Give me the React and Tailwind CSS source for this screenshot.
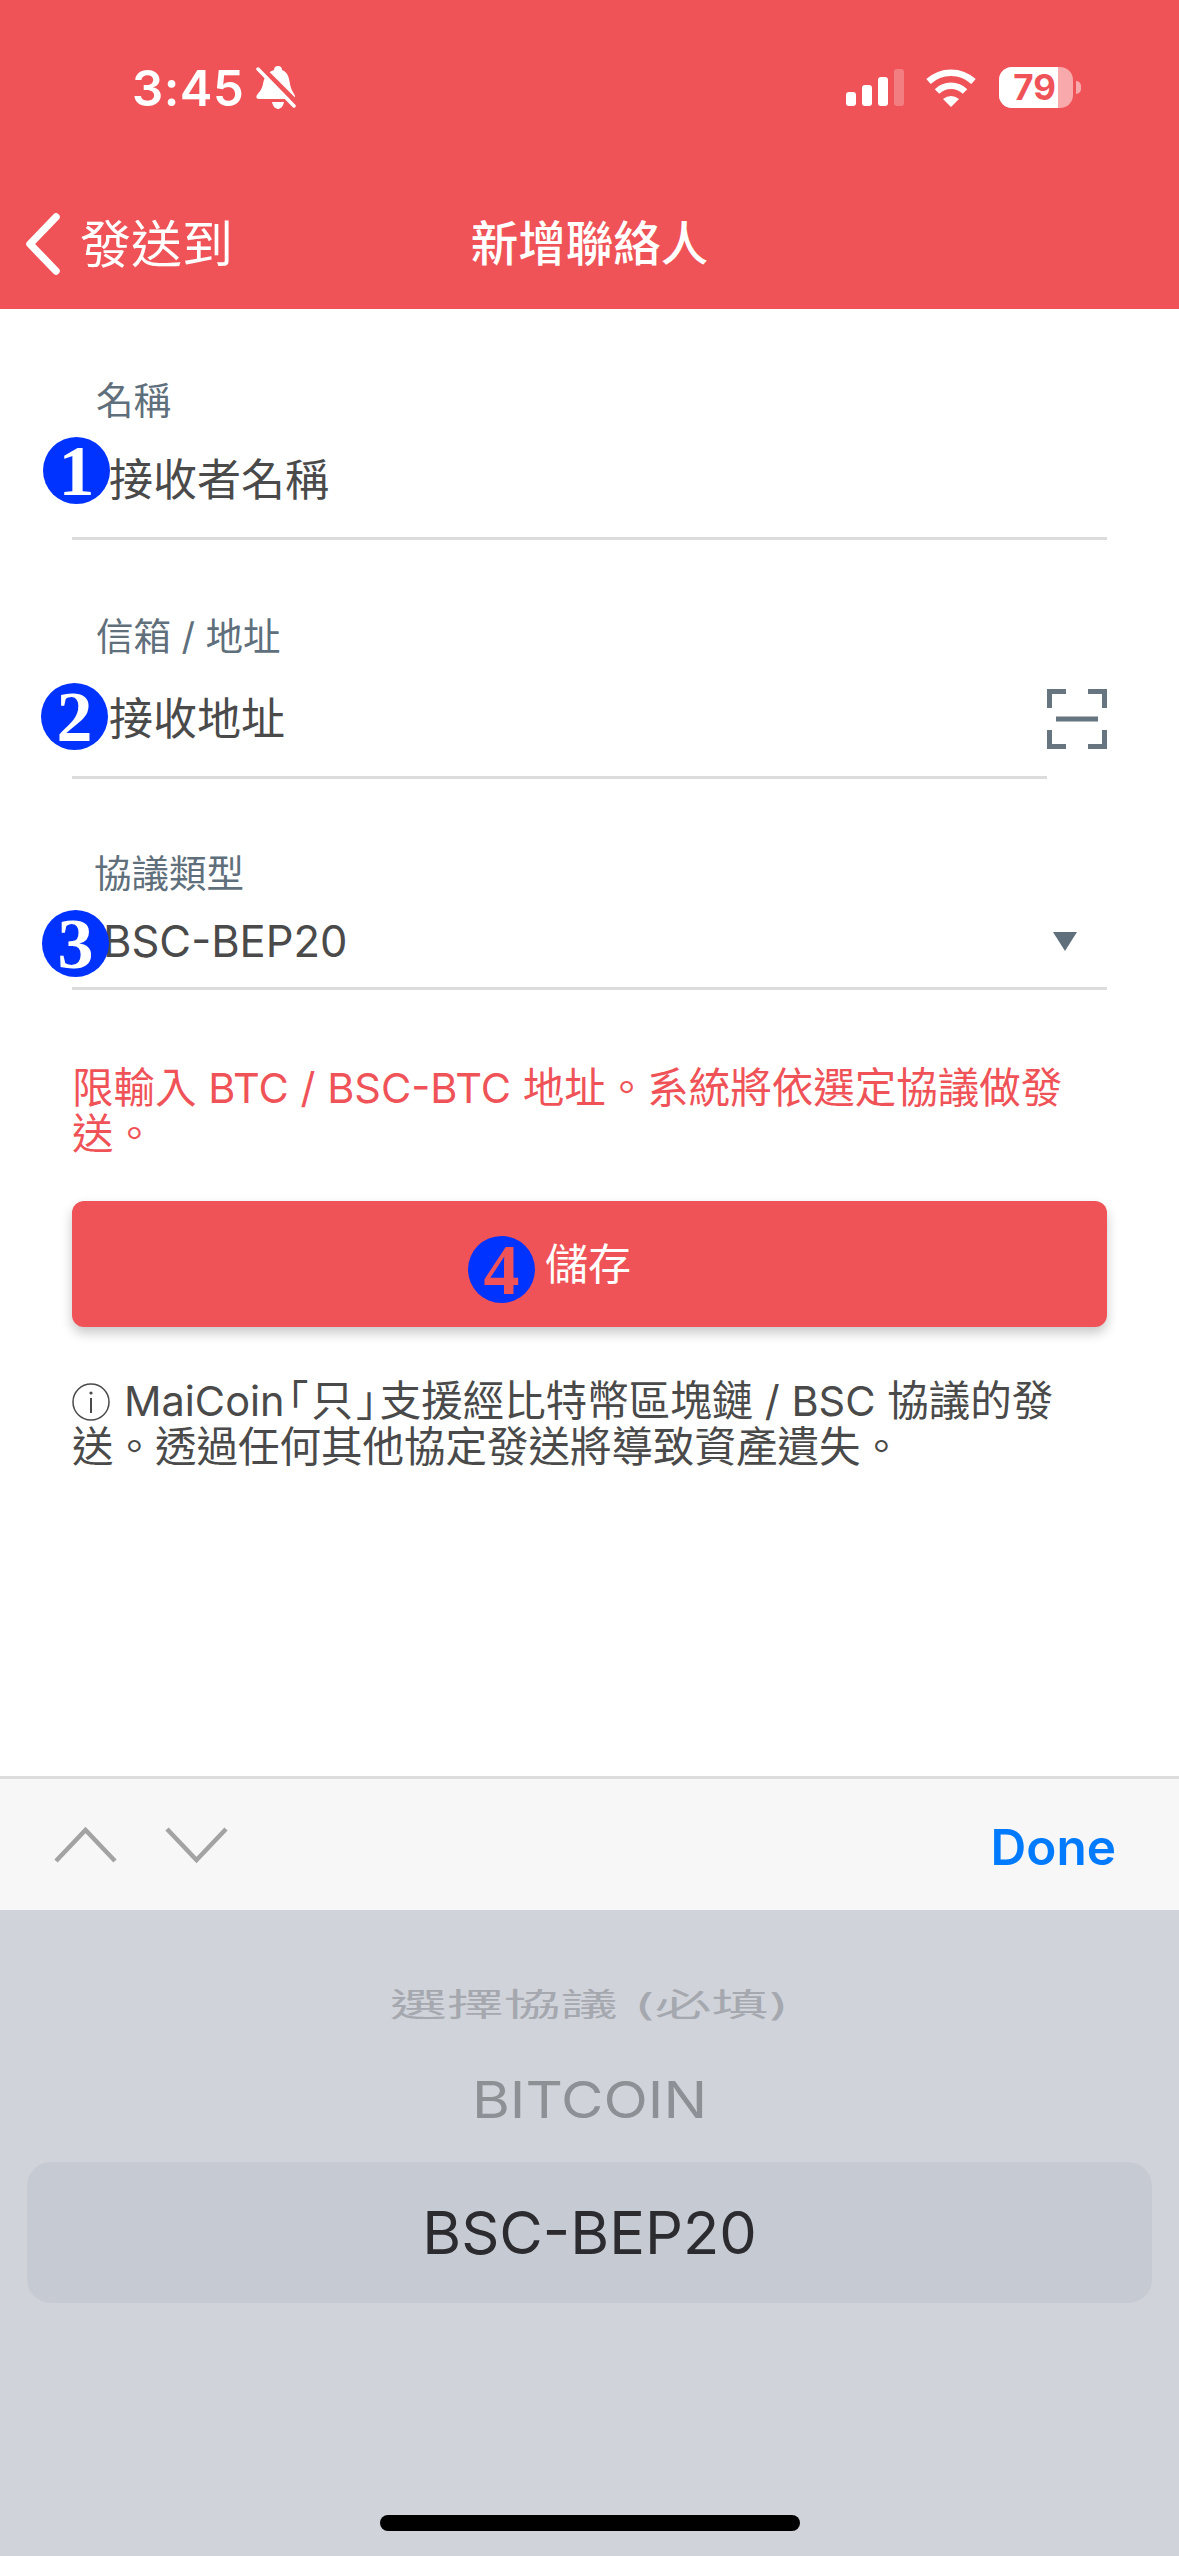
import React from "react";

function Badge({ n, className = "", digit = "text-white" }) {
  return (
    <span
      className={`absolute flex h-[67px] w-[67px] items-center justify-center rounded-full bg-[#0033ff] font-['Liberation_Serif',serif] text-[72px] font-bold leading-none ${digit} ${className}`}
    >
      {n}
    </span>
  );
}

function StatusBar() {
  return (
    <div className="mt-[67px] flex h-[69px] items-start justify-between pl-[132px] pr-[98px]">
      <div className="flex items-center">
        <span className="text-[49px] font-semibold leading-[44px] tracking-[0.5px] text-white">3:45</span>
        <svg width="40" height="44" viewBox="0 0 40 44" className="ml-[12px] -mt-[3px]">
          <path
            d="M22 0C25 0 26 2 26 4C32 6 33 12 34 18C35 24 38 27 39 30C39.5 32 38 33 36 33H3C1 33 0 32 .5 30C2 27 6 24 7 18C8 12 11 6 18 4C18 2 19 0 22 0Z"
            fill="#fff"
          />
          <path d="M16 36H28C27 41 24 43 22 43C20 43 17 41 16 36Z" fill="#fff" />
          <path d="M5 1L41 37" stroke="#ef5358" strokeWidth="5" />
          <path d="M2 3L38 40" stroke="#fff" strokeWidth="3.5" strokeLinecap="round" />
        </svg>
      </div>
      <div className="flex items-start">
        <div className="mt-[2px] flex h-[37px] items-end gap-[6px]">
          <span className="h-[14px] w-[10px] rounded-[3px] bg-white" />
          <span className="h-[21px] w-[10px] rounded-[3px] bg-white" />
          <span className="h-[29px] w-[10px] rounded-[3px] bg-white" />
          <span className="h-[37px] w-[10px] rounded-[3px] bg-white/25" />
        </div>
        <svg width="52" height="38" viewBox="0 0 52 38" fill="none" className="ml-[21px] mt-[2px]">
          <path d="M3.5 12.5A33 33 0 0 1 48.5 12.5" stroke="#fff" strokeWidth="6.5" />
          <path d="M12 22.5A20 20 0 0 1 40 22.5" stroke="#fff" strokeWidth="6.5" />
          <path d="M18 30Q26 24 34 30L26 38Z" fill="#fff" />
        </svg>
        <div className="ml-[22px] h-[41px] w-[74px] overflow-hidden rounded-[13px] bg-white/50">
          <div className="flex h-full w-[59px] items-center justify-end bg-white pr-[2px]">
            <span className="text-[35px] font-bold leading-none text-[#ef5358]">79</span>
          </div>
        </div>
        <div className="ml-[3px] mt-[14px] h-[13px] w-[5px] rounded-r-full bg-white/50" />
      </div>
    </div>
  );
}

function Field({ label, labelPad, badge, badgeClass, className = "", right, children }) {
  return (
    <div className={`relative ${className}`}>
      <div className={`h-[50px] text-[37.5px] leading-[50px] text-[#5f6f7b] ${labelPad}`}>{label}</div>
      {children}
      <Badge n={badge} className={badgeClass} />
      {right}
    </div>
  );
}

export default function App() {
  return (
    <div className="flex h-[2556px] w-[1179px] flex-col overflow-hidden bg-white font-['Inter','Noto_Sans_CJK_TC',sans-serif]">
      <header className="h-[309px] shrink-0 bg-[#ef5358]">
        <StatusBar />
        <div className="relative mt-[73px] flex h-[70px] items-center justify-center text-[47.5px] leading-none text-white">
          <div className="absolute left-[25px] top-[4px] flex items-center">
            <svg width="36" height="62" viewBox="0 0 36 62" fill="none">
              <path d="M31 4L5 31L31 58" stroke="#fff" strokeWidth="7.5" strokeLinecap="round" strokeLinejoin="round" />
            </svg>
            <span className="ml-[19px] text-[51px] font-normal">發送到</span>
          </div>
          <span className="font-medium">新增聯絡人</span>
        </div>
      </header>

      <main className="flex-1 px-[72px]">
        <Field label="名稱" labelPad="pl-[24px]" badge="1" badgeClass="-left-[29px] top-[61px]" className="mt-[67px]">
          <div className="h-[114px] border-b-[3px] border-[#dcdcdc] pl-[37px] pt-[25px] text-[44px] leading-[58px] text-[#4a4a4a]">
            接收者名稱
          </div>
        </Field>

        <Field
          label="信箱 / 地址"
          labelPad="pl-[24px]"
          badge="2"
          badgeClass="-left-[31px] top-[71px]"
          className="mt-[72px]"
          right={
            <svg width="60" height="60" viewBox="0 0 60 60" fill="none" className="absolute right-0 top-[77px]">
              <path
                d="M2.5 19V2.5H19M41 2.5H57.5V19M2.5 41V57.5H19M41 57.5H57.5V41M9 30H51"
                stroke="#66757f"
                strokeWidth="5"
              />
            </svg>
          }
        >
          <div className="mr-[60px] h-[117px] border-b-[3px] border-[#dcdcdc] pl-[37px] pt-[28px] text-[44px] leading-[58px] text-[#4a4a4a]">
            接收地址
          </div>
        </Field>

        <Field
          label="協議類型"
          labelPad="pl-[22px]"
          badge="3"
          badgeClass="-left-[30px] top-[61px]"
          className="mt-[70px]"
          right={<div className="absolute right-[30px] top-[83px] h-0 w-0 border-x-[12px] border-t-[19px] border-x-transparent border-t-[#5f6f7b]" />}
        >
          <div className="h-[91px] border-b-[3px] border-[#dcdcdc] pl-[31px] pt-[13px] text-[43.5px] leading-[58px] text-[#4a4a4a]">
            BSC-BEP20
          </div>
        </Field>

        <p className="mt-[75px] whitespace-nowrap text-[41.5px] leading-[46px] text-[#ef5358]">
          限輸入 BTC / BSC-BTC 地址。系統將依選定協議做發
          <br />
          送。
        </p>

        <button className="relative mt-[44px] flex h-[126px] w-full items-center justify-center rounded-[12px] bg-[#ef5358] text-[43px] text-white shadow-[0_6px_12px_rgba(0,0,0,0.22)]">
          <Badge n="4" className="left-[396px] top-[35px]" digit="text-[#ef5358]" />
          <span className="-ml-[3px]">儲存</span>
        </button>

        <p className="mt-[51px] whitespace-nowrap text-[41.5px] leading-[46px] text-[#4a4a4a]">
          <svg width="38" height="38" viewBox="0 0 38 38" fill="none" className="mr-[14px] inline-block -translate-y-[3px] align-middle">
            <circle cx="19" cy="19" r="18" stroke="#4a4a4a" strokeWidth="1.5" />
            <path d="M19 15V30" stroke="#4a4a4a" strokeWidth="2" />
            <circle cx="19" cy="10" r="1.6" fill="#4a4a4a" />
          </svg>
          MaiCoin<span className="mx-[3px] [font-feature-settings:'halt']">「</span>只<span className="mx-[3px] [font-feature-settings:'halt']">」</span>支援經比特幣區塊鏈 / BSC 協議的發
          <br />
          送。透過任何其他協定發送將導致資產遺失。
        </p>
      </main>

      <div className="flex h-[134px] shrink-0 items-center justify-between border-t-[3px] border-[#dcdcdc] bg-[#f7f7f7] pl-[54px] pr-[63px]">
        <div className="flex items-center gap-[48px]">
          <svg width="63" height="36" viewBox="0 0 63 36" fill="none">
            <path d="M2 34L31.5 3L61 34" stroke="#a3a3a3" strokeWidth="4.5" />
          </svg>
          <svg width="63" height="36" viewBox="0 0 63 36" fill="none">
            <path d="M2 2L31.5 33L61 2" stroke="#a3a3a3" strokeWidth="4.5" />
          </svg>
        </div>
        <span className="translate-y-[3px] text-[49.5px] font-semibold leading-none text-[#007aff]">Done</span>
      </div>

      <div className="flex h-[646px] shrink-0 flex-col bg-[#d0d3da]">
        <div className="mt-[76px] h-[38px] scale-y-[0.55] whitespace-nowrap text-center text-[57px] leading-[38px] text-[#a5a8ae]">
          選擇協議 (必填)
        </div>
        <div className="mt-[43px] h-[66px] scale-y-[0.88] text-center text-[58px] leading-[66px] text-[#8d9094]">BITCOIN</div>
        <div className="mx-[27px] mt-[29px] flex h-[141px] items-center justify-center rounded-[24px] bg-[#c6cad2] text-[59.5px] text-[#2c2c30]">
          BSC-BEP20
        </div>
        <div className="mx-auto mt-[212px] h-[16px] w-[420px] rounded-full bg-black" />
      </div>
    </div>
  );
}
